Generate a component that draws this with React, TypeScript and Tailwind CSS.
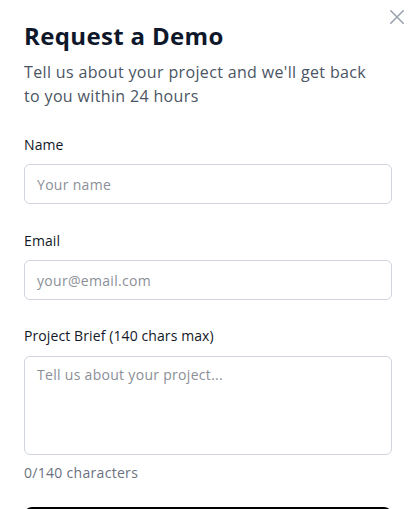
import React from "react";

export default function App() {
  const font = { fontFamily: '"Open Sans", "Liberation Sans", sans-serif' };
  return (
    <div className="relative w-[416px] h-[509px] overflow-hidden bg-white" style={font}>
      <button aria-label="Close" className="absolute left-[390px] top-[10px] w-[14px] h-[14px] flex items-center justify-center text-[#9ca3af]">
        <svg width="14" height="14" viewBox="0 0 14 14" fill="none" stroke="currentColor" strokeWidth="1.6" strokeLinecap="round">
          <path d="M0.8 0.8L13.2 13.2M13.2 0.8L0.8 13.2" />
        </svg>
      </button>
      <div className="px-6 pt-[20px]">
        <h2 className="text-[24px] leading-[32px] font-bold text-[#0f172a] tracking-[0.35px]">Request a Demo</h2>
        <p className="mt-[8px] text-[16px] leading-6 text-[#4b5563] w-[352px] tracking-[0.35px]">
          Tell us about your project and we'll get back to you within 24 hours
        </p>
        <div className="mt-[27px]">
          <label className="block text-[14px] leading-5 font-medium text-[#111827] tracking-[0.1px]">Name</label>
          <input
            className="mt-[9px] block w-full h-10 rounded-md border border-gray-300 px-3 text-sm tracking-[0.3px] outline-none placeholder:text-[#8b8f97]"
            placeholder="Your name"
            style={font}
          />
        </div>
        <div className="mt-[27px]">
          <label className="block text-[14px] leading-5 font-medium text-[#111827] tracking-[0.1px]">Email</label>
          <input
            className="mt-[9px] block w-full h-10 rounded-md border border-gray-300 px-3 text-sm tracking-[0.3px] outline-none placeholder:text-[#8b8f97]"
            placeholder="your@email.com"
            style={font}
          />
        </div>
        <div className="mt-[26px]">
          <label className="block text-[14px] leading-5 font-medium text-[#111827] tracking-[0.1px]">Project Brief (140 chars max)</label>
          <textarea
            className="mt-[10px] block w-full h-[99px] resize-none rounded-md border border-gray-300 px-3 py-2 text-sm tracking-[0.3px] outline-none placeholder:text-[#8b8f97]"
            placeholder="Tell us about your project..."
            style={font}
          />
          <p className="mt-[8px] text-[14px] leading-5 text-[#6b7280] tracking-[0.3px]">0/140 characters</p>
        </div>
        <button aria-label="Submit" className="mt-[24px] block w-full h-10 rounded-lg bg-black"></button>
      </div>
    </div>
  );
}
